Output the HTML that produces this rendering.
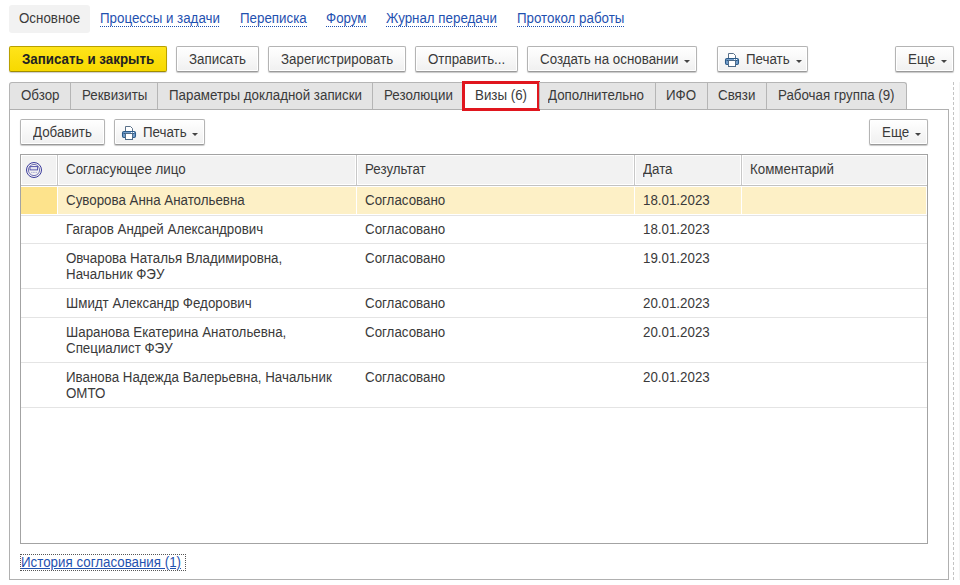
<!DOCTYPE html>
<html><head><meta charset="utf-8">
<style>
html,body{margin:0;padding:0;background:#fff;width:960px;height:585px;overflow:hidden;position:relative;}
*{box-sizing:border-box;}
body{font-family:"Liberation Sans",sans-serif;font-size:13.333px;color:#3a3a3a;}
.a{position:absolute;}
.t{position:absolute;white-space:nowrap;line-height:16px;height:16px;font-size:14px;transform:scaleX(0.95238);transform-origin:0 0;}
.nav-act{position:absolute;left:9px;top:5px;width:81px;height:28px;background:#f2f2f2;border-radius:3px;}
.lnk{color:#1f51b0;}
.dul{position:absolute;top:26px;height:1px;background:repeating-linear-gradient(90deg,#1f51b0 0 1px,transparent 1px 2px);}
.btn{position:absolute;top:46px;height:26px;border:1px solid #b4b4b4;border-bottom-color:#9a9a9a;border-radius:2px;background:linear-gradient(#ffffff,#f0f0f0);box-shadow:0 1px 1px rgba(0,0,0,0.22), inset 0 0 0 1px #fff;}
.ybtn{position:absolute;top:46px;height:26px;border:1px solid #b8a000;border-bottom-color:#a08c00;border-radius:2px;background:linear-gradient(#ffe41a,#f7d900);box-shadow:0 1px 1px rgba(0,0,0,0.2);}
.arr{position:absolute;width:0;height:0;border-left:3px solid transparent;border-right:3px solid transparent;border-top:3px solid #444;}
.tab{position:absolute;top:82px;height:27px;background:#e4e4e4;border:1px solid #b5b5b5;border-bottom:none;}
.panel{position:absolute;left:9px;top:109px;width:940px;height:471px;border:1px solid #b0b0b0;}
.tbl{position:absolute;left:20px;top:154px;width:908px;height:390px;border:1px solid #a3a3a3;}
.hc{position:absolute;top:155px;height:30px;background:#f2f2f2;border:1px solid #fff;}
.vsep{position:absolute;top:155px;width:1px;height:30px;background:#c8c8c8;}
.rsep{position:absolute;left:21px;width:906px;height:1px;background:#e4e4e4;}
</style></head>
<body>
<!-- top nav -->
<div class="nav-act"></div>
<div class="t" style="left:19px;top:10px;">Основное</div>
<div class="t lnk" style="left:100px;top:10px;">Процессы и задачи</div><div class="dul" style="left:100px;width:120px;"></div>
<div class="t lnk" style="left:240px;top:10px;">Переписка</div><div class="dul" style="left:240px;width:67px;"></div>
<div class="t lnk" style="left:326px;top:10px;">Форум</div><div class="dul" style="left:326px;width:41px;"></div>
<div class="t lnk" style="left:386px;top:10px;">Журнал передачи</div><div class="dul" style="left:386px;width:111px;"></div>
<div class="t lnk" style="left:517px;top:10px;">Протокол работы</div><div class="dul" style="left:517px;width:108px;"></div>

<!-- toolbar -->
<div class="ybtn" style="left:9px;width:158px;"></div>
<div class="t" style="left:22px;top:51px;font-weight:bold;color:#222;">Записать и закрыть</div>
<div class="btn" style="left:176px;width:83px;"></div>
<div class="t" style="left:189px;top:51px;">Записать</div>
<div class="btn" style="left:268px;width:138px;"></div>
<div class="t" style="left:281px;top:51px;">Зарегистрировать</div>
<div class="btn" style="left:415px;width:103px;"></div>
<div class="t" style="left:428px;top:51px;">Отправить...</div>
<div class="btn" style="left:527px;width:170px;"></div>
<div class="t" style="left:540px;top:51px;">Создать на основании</div>
<div class="arr" style="left:684px;top:60px;"></div>
<div class="btn" style="left:717px;width:91px;"></div>
<svg class="a" style="left:724px;top:52px;" width="16" height="16" viewBox="0 0 16 16"><path d="M4.5 6.5V1.5h5l2 2v3" fill="#fff" stroke="#5a7089" stroke-width="1"/><rect x="1.5" y="6.5" width="13" height="6" rx="1.5" fill="#76a0cd" stroke="#2b5a88" stroke-width="1.1"/><path d="M2.5 8.5h11" stroke="#2b5a88" stroke-width="1"/><rect x="10" y="7" width="1" height="1" fill="#fff"/><rect x="12" y="7" width="1" height="1" fill="#fff"/><rect x="4.5" y="8.5" width="7" height="6" fill="#fff" stroke="#4f6b88" stroke-width="1"/></svg>
<div class="t" style="left:746px;top:51px;">Печать</div>
<div class="arr" style="left:796px;top:60px;"></div>
<div class="btn" style="left:895px;width:59px;"></div>
<div class="t" style="left:908px;top:51px;">Еще</div>
<div class="arr" style="left:941px;top:60px;"></div>

<!-- dashed right line -->
<div class="a" style="left:959px;top:82px;width:1px;height:498px;background:#f4f4f4;"></div>
<div class="a" style="left:953px;top:82px;width:1px;height:498px;background:repeating-linear-gradient(#c4c4c4 0 3px,transparent 3px 5px);"></div>

<!-- panel -->
<div class="panel"></div>

<!-- tabs -->
<div class="tab" style="left:9px;width:62px;border-top-left-radius:3px;"></div>
<div class="t" style="left:21px;top:87px;">Обзор</div>
<div class="tab" style="left:70px;width:88px;"></div>
<div class="t" style="left:82px;top:87px;">Реквизиты</div>
<div class="tab" style="left:157px;width:216px;"></div>
<div class="t" style="left:169px;top:87px;">Параметры докладной записки</div>
<div class="tab" style="left:372px;width:91px;"></div>
<div class="t" style="left:384px;top:87px;">Резолюции</div>
<div class="a" style="left:462px;top:81px;width:78px;height:30px;background:#fff;border:3px solid #e0161e;"></div>
<div class="t" style="left:475px;top:87px;">Визы (6)</div>
<div class="tab" style="left:539px;width:117px;"></div>
<div class="t" style="left:548px;top:87px;">Дополнительно</div>
<div class="tab" style="left:655px;width:53px;"></div>
<div class="t" style="left:666px;top:87px;">ИФО</div>
<div class="tab" style="left:707px;width:60px;"></div>
<div class="t" style="left:718px;top:87px;">Связи</div>
<div class="tab" style="left:766px;width:141px;border-top-right-radius:3px;"></div>
<div class="t" style="left:778px;top:87px;">Рабочая группа (9)</div>

<!-- panel toolbar -->
<div class="btn" style="left:20px;top:119px;width:85px;height:26px;"></div>
<div class="t" style="left:33px;top:124px;">Добавить</div>
<div class="btn" style="left:114px;top:119px;width:91px;height:26px;"></div>
<svg class="a" style="left:121px;top:125px;" width="16" height="16" viewBox="0 0 16 16"><path d="M4.5 6.5V1.5h5l2 2v3" fill="#fff" stroke="#5a7089" stroke-width="1"/><rect x="1.5" y="6.5" width="13" height="6" rx="1.5" fill="#76a0cd" stroke="#2b5a88" stroke-width="1.1"/><path d="M2.5 8.5h11" stroke="#2b5a88" stroke-width="1"/><rect x="10" y="7" width="1" height="1" fill="#fff"/><rect x="12" y="7" width="1" height="1" fill="#fff"/><rect x="4.5" y="8.5" width="7" height="6" fill="#fff" stroke="#4f6b88" stroke-width="1"/></svg>
<div class="t" style="left:143px;top:124px;">Печать</div>
<div class="arr" style="left:192px;top:133px;"></div>
<div class="btn" style="left:869px;top:119px;width:59px;height:26px;"></div>
<div class="t" style="left:882px;top:124px;">Еще</div>
<div class="arr" style="left:915px;top:133px;"></div>

<!-- table -->
<div class="tbl"></div>
<div class="a" style="left:21px;top:185px;width:906px;height:1px;background:#c2c2c2;"></div>
<div class="hc" style="left:21px;width:36px;"></div>
<div class="vsep" style="left:57px;"></div>
<div class="hc" style="left:58px;width:298px;"></div>
<div class="vsep" style="left:356px;"></div>
<div class="hc" style="left:357px;width:277px;"></div>
<div class="vsep" style="left:634px;"></div>
<div class="hc" style="left:635px;width:106px;"></div>
<div class="vsep" style="left:741px;"></div>
<div class="hc" style="left:742px;width:185px;"></div>
<svg class="a" style="left:26px;top:162px;" width="16" height="16" viewBox="0 0 16 16"><circle cx="8" cy="8" r="7.5" fill="none" stroke="#3a3a9c" stroke-width="1"/><circle cx="8" cy="8" r="5.6" fill="none" stroke="#6464b0" stroke-width="0.9"/><rect x="4" y="4.6" width="7.6" height="3.3" fill="#e6e6f2" stroke="#4a4aa6" stroke-width="0.9"/><path d="M5.2 10.4h5.6" stroke="#8a8ac8" stroke-width="0.8" stroke-dasharray="1 0.6"/></svg>
<div class="t" style="left:66px;top:161px;">Согласующее лицо</div>
<div class="t" style="left:365px;top:161px;">Результат</div>
<div class="t" style="left:643px;top:161px;">Дата</div>
<div class="t" style="left:750px;top:161px;">Комментарий</div>

<!-- selected row -->
<div class="a" style="left:21px;top:187px;width:36px;height:27px;background:#fde38c;"></div>
<div class="a" style="left:58px;top:187px;width:868px;height:27px;background:#fdf0c6;"></div>
<div class="a" style="left:356px;top:187px;width:1px;height:27px;background:#fff;"></div>
<div class="a" style="left:634px;top:187px;width:1px;height:27px;background:#fff;"></div>
<div class="a" style="left:741px;top:187px;width:1px;height:27px;background:#fff;"></div>

<div class="rsep" style="top:215px;"></div>
<div class="rsep" style="top:243px;"></div>
<div class="rsep" style="top:288px;"></div>
<div class="rsep" style="top:317px;"></div>
<div class="rsep" style="top:362px;"></div>
<div class="rsep" style="top:407px;"></div>

<div class="t" style="left:66px;top:192px;">Суворова Анна Анатольевна</div>
<div class="t" style="left:365px;top:192px;">Согласовано</div>
<div class="t" style="left:643px;top:192px;">18.01.2023</div>

<div class="t" style="left:66px;top:221px;">Гагаров Андрей Александрович</div>
<div class="t" style="left:365px;top:221px;">Согласовано</div>
<div class="t" style="left:643px;top:221px;">18.01.2023</div>

<div class="t" style="left:66px;top:250px;">Овчарова Наталья Владимировна,</div>
<div class="t" style="left:66px;top:266px;">Начальник ФЭУ</div>
<div class="t" style="left:365px;top:250px;">Согласовано</div>
<div class="t" style="left:643px;top:250px;">19.01.2023</div>

<div class="t" style="left:66px;top:295px;">Шмидт Александр Федорович</div>
<div class="t" style="left:365px;top:295px;">Согласовано</div>
<div class="t" style="left:643px;top:295px;">20.01.2023</div>

<div class="t" style="left:66px;top:324px;">Шаранова Екатерина Анатольевна,</div>
<div class="t" style="left:66px;top:340px;">Специалист ФЭУ</div>
<div class="t" style="left:365px;top:324px;">Согласовано</div>
<div class="t" style="left:643px;top:324px;">20.01.2023</div>

<div class="t" style="left:66px;top:369px;">Иванова Надежда Валерьевна, Начальник</div>
<div class="t" style="left:66px;top:385px;">ОМТО</div>
<div class="t" style="left:365px;top:369px;">Согласовано</div>
<div class="t" style="left:643px;top:369px;">20.01.2023</div>

<!-- link -->
<div class="a" style="left:20px;top:554px;width:166px;height:17px;border:1px dotted #555;"></div>
<div class="t" style="left:21px;top:554px;color:#1f51b0;text-decoration:underline;">История согласования (1)</div>
</body></html>
